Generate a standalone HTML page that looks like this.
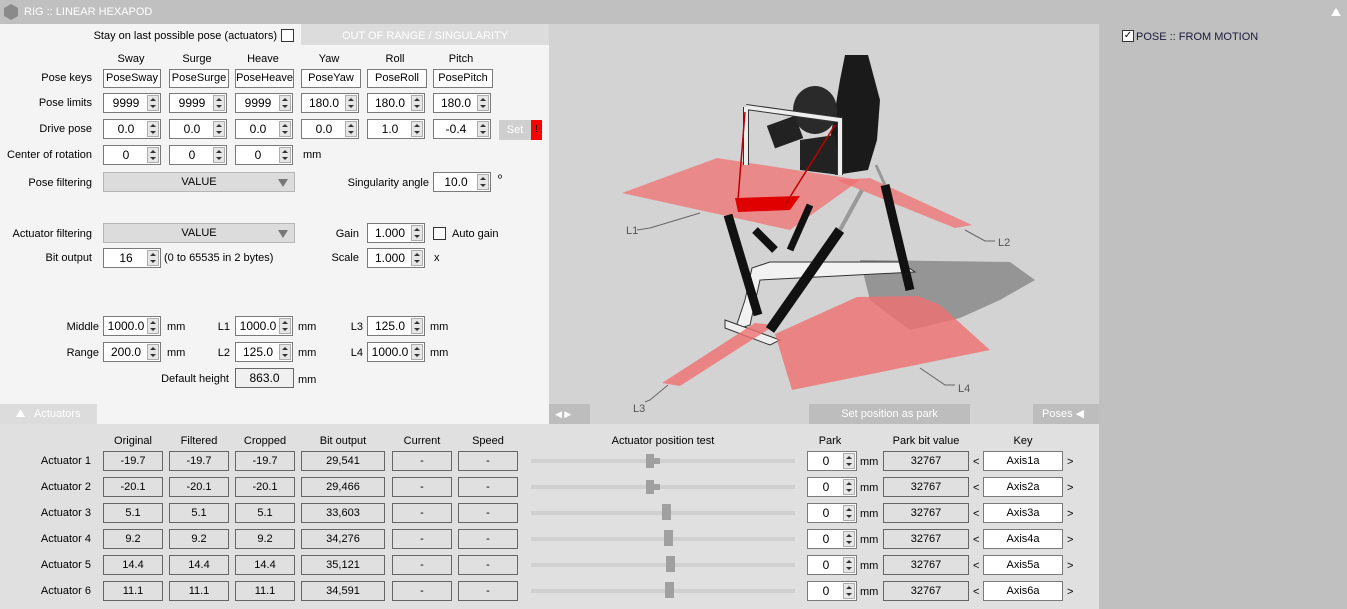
<!DOCTYPE html>
<html><head><meta charset="utf-8"><style>
*{box-sizing:border-box;margin:0;padding:0}
body{width:1347px;height:609px;overflow:hidden;background:#c0c0c0;font-family:"Liberation Sans",sans-serif;font-size:11px;color:#000;position:relative}
.a{position:absolute}
.t{position:absolute;white-space:nowrap;line-height:14px}
.r{text-align:right}
.c{text-align:center}
.box{position:absolute;background:#fff;border:1px solid #7a7a7a;height:20px;line-height:18px;text-align:center;white-space:nowrap}
.sp{position:absolute;background:#fff;border:1px solid #7a7a7a;height:20px;width:58px}
.sp span{position:absolute;left:0;width:44px;text-align:center;line-height:18px;font-size:12px}
.sp i{position:absolute;right:1px;top:1px;width:12px;height:16px;background:#e6e6e6;border:1px solid #adadad}
.sp i:before{content:"";position:absolute;left:2px;top:2px;border-left:3px solid transparent;border-right:3px solid transparent;border-bottom:3px solid #333}
.sp i:after{content:"";position:absolute;left:2px;top:9px;border-left:3px solid transparent;border-right:3px solid transparent;border-top:3px solid #333}
.ro{position:absolute;background:#e0e0e0;border:1px solid #666;height:20px;line-height:18px;text-align:center}
.dd{position:absolute;background:#dcdcdc;border:1px solid #b5b5b5;height:20px;line-height:18px;text-align:center}
.dd:after{content:"";position:absolute;right:6px;top:6px;border-left:5px solid transparent;border-right:5px solid transparent;border-top:8px solid #777}
.cb{position:absolute;width:13px;height:13px;border:1px solid #333;background:#fff}
.sl{position:absolute;height:4px;background:#d0d0d0;width:264px;left:531px}
.th{position:absolute;width:8px;height:14px;background:#a0a0a0}
.th:after{content:"";position:absolute;left:8px;top:4px;width:6px;height:6px;background:#a0a0a0}
</style></head><body>
<div class="a" style="left:0;top:0;width:1347px;height:24px;background:#c0c0c0"></div>
<svg class="a" style="left:3px;top:3px" width="16" height="18"><polygon points="8,1 15,5 15,13 8,17 1,13 1,5" fill="#8a8a8a"/></svg>
<div class="t" style="left:24px;top:5px;color:#fff">RIG :: LINEAR HEXAPOD</div>
<svg class="a" style="left:1331px;top:8px" width="10" height="8"><polygon points="5,0 10,8 0,8" fill="#fff"/></svg>

<div class="a" style="left:0;top:24px;width:549px;height:380px;background:#f4f4f4"></div>
<div class="a" style="left:301px;top:24px;width:248px;height:21px;background:#dcdcdc"></div>
<div class="t" style="left:301px;top:29px;width:248px;text-align:center;color:#fff">OUT OF RANGE / SINGULARITY</div>
<div class="t" style="left:60px;top:29px;width:217px;text-align:right">Stay on last possible pose (actuators)</div>
<div class="cb" style="left:281px;top:29px"></div>

<div class="t c" style="left:103px;top:52px;width:56px">Sway</div>
<div class="t c" style="left:169px;top:52px;width:56px">Surge</div>
<div class="t c" style="left:235px;top:52px;width:56px">Heave</div>
<div class="t c" style="left:301px;top:52px;width:56px">Yaw</div>
<div class="t c" style="left:367px;top:52px;width:56px">Roll</div>
<div class="t c" style="left:433px;top:52px;width:56px">Pitch</div>

<div class="t r" style="left:0;top:71px;width:92px">Pose keys</div>
<div class="box" style="left:103px;top:69px;width:58px;height:19px;line-height:17px">PoseSway</div>
<div class="box" style="left:169px;top:69px;width:60px;height:19px;line-height:17px;overflow:hidden">PoseSurge</div>
<div class="box" style="left:235px;top:69px;width:59px;height:19px;line-height:17px;overflow:hidden">PoseHeave</div>
<div class="box" style="left:301px;top:69px;width:60px;height:19px;line-height:17px">PoseYaw</div>
<div class="box" style="left:367px;top:69px;width:60px;height:19px;line-height:17px">PoseRoll</div>
<div class="box" style="left:433px;top:69px;width:60px;height:19px;line-height:17px">PosePitch</div>

<div class="t r" style="left:0;top:96px;width:92px">Pose limits</div>
<div class="sp" style="left:103px;top:93px"><span>9999</span><i></i></div>
<div class="sp" style="left:169px;top:93px"><span>9999</span><i></i></div>
<div class="sp" style="left:235px;top:93px"><span>9999</span><i></i></div>
<div class="sp" style="left:301px;top:93px"><span>180.0</span><i></i></div>
<div class="sp" style="left:367px;top:93px"><span>180.0</span><i></i></div>
<div class="sp" style="left:433px;top:93px"><span>180.0</span><i></i></div>

<div class="t r" style="left:0;top:122px;width:92px">Drive pose</div>
<div class="sp" style="left:103px;top:119px"><span>0.0</span><i></i></div>
<div class="sp" style="left:169px;top:119px"><span>0.0</span><i></i></div>
<div class="sp" style="left:235px;top:119px"><span>0.0</span><i></i></div>
<div class="sp" style="left:301px;top:119px"><span>0.0</span><i></i></div>
<div class="sp" style="left:367px;top:119px"><span>1.0</span><i></i></div>
<div class="sp" style="left:433px;top:119px"><span>-0.4</span><i></i></div>
<div class="a" style="left:499px;top:120px;width:32px;height:20px;background:#cfcfcf;color:#fff;text-align:center;line-height:20px">Set</div>
<div class="a" style="left:531px;top:120px;width:11px;height:20px;background:#f00;color:#000;text-align:center;line-height:20px;font-size:10px">!</div>

<div class="t r" style="left:0;top:148px;width:92px">Center of rotation</div>
<div class="sp" style="left:103px;top:145px"><span>0</span><i></i></div>
<div class="sp" style="left:169px;top:145px"><span>0</span><i></i></div>
<div class="sp" style="left:235px;top:145px"><span>0</span><i></i></div>
<div class="t" style="left:303px;top:148px">mm</div>

<div class="t r" style="left:0;top:176px;width:92px">Pose filtering</div>
<div class="dd" style="left:103px;top:172px;width:192px">VALUE</div>
<div class="t r" style="left:330px;top:176px;width:99px">Singularity angle</div>
<div class="sp" style="left:433px;top:172px"><span>10.0</span><i></i></div>
<div class="t" style="left:498px;top:172px">º</div>

<div class="t r" style="left:0;top:227px;width:92px">Actuator filtering</div>
<div class="dd" style="left:103px;top:223px;width:192px">VALUE</div>
<div class="t r" style="left:300px;top:227px;width:59px">Gain</div>
<div class="sp" style="left:367px;top:223px"><span>1.000</span><i></i></div>
<div class="cb" style="left:433px;top:227px"></div>
<div class="t" style="left:452px;top:227px">Auto gain</div>

<div class="t r" style="left:0;top:251px;width:92px">Bit output</div>
<div class="sp" style="left:103px;top:248px"><span>16</span><i></i></div>
<div class="t" style="left:164px;top:251px">(0 to 65535 in 2 bytes)</div>
<div class="t r" style="left:300px;top:251px;width:59px">Scale</div>
<div class="sp" style="left:367px;top:248px"><span>1.000</span><i></i></div>
<div class="t" style="left:434px;top:251px">x</div>

<div class="t r" style="left:0;top:320px;width:99px">Middle</div>
<div class="sp" style="left:103px;top:316px"><span>1000.0</span><i></i></div>
<div class="t" style="left:167px;top:320px">mm</div>
<div class="t r" style="left:200px;top:320px;width:30px">L1</div>
<div class="sp" style="left:235px;top:316px"><span>1000.0</span><i></i></div>
<div class="t" style="left:298px;top:320px">mm</div>
<div class="t r" style="left:330px;top:320px;width:33px">L3</div>
<div class="sp" style="left:367px;top:316px"><span>125.0</span><i></i></div>
<div class="t" style="left:430px;top:320px">mm</div>

<div class="t r" style="left:0;top:346px;width:99px">Range</div>
<div class="sp" style="left:103px;top:342px"><span>200.0</span><i></i></div>
<div class="t" style="left:167px;top:346px">mm</div>
<div class="t r" style="left:200px;top:346px;width:30px">L2</div>
<div class="sp" style="left:235px;top:342px"><span>125.0</span><i></i></div>
<div class="t" style="left:298px;top:346px">mm</div>
<div class="t r" style="left:330px;top:346px;width:33px">L4</div>
<div class="sp" style="left:367px;top:342px"><span>1000.0</span><i></i></div>
<div class="t" style="left:430px;top:346px">mm</div>

<div class="t r" style="left:100px;top:372px;width:129px">Default height</div>
<div class="ro" style="left:235px;top:368px;width:59px;background:#f0f0f0;font-size:12px">863.0</div>
<div class="t" style="left:298px;top:373px">mm</div>

<div class="a" style="left:0;top:404px;width:549px;height:20px;background:#f4f4f4"></div>
<div class="a" style="left:0;top:404px;width:97px;height:20px;background:#dcdcdc"></div>
<svg class="a" style="left:16px;top:409px" width="9" height="8"><polygon points="4.5,0 9,8 0,8" fill="#fff"/></svg>
<div class="t" style="left:34px;top:407px;color:#fff">Actuators</div>

<div class="a" style="left:549px;top:24px;width:550px;height:400px;background:#d3d3d3;overflow:hidden">
<svg width="550" height="400" viewBox="549 24 550 400">
 <polygon points="860,260 1010,262 1035,280 1000,300 960,318 910,330 870,300" fill="#7a7a7a" opacity="0.7"/>
 <polygon points="735,330 745,300 752,268 770,262 900,262 915,272 760,280 750,325" fill="#f2f2f2" stroke="#333" stroke-width="1"/>
 <polygon points="725,320 780,340 770,345 725,328" fill="#eee" stroke="#333"/>
 <polygon points="622,193 717,158 860,180 790,230" fill="#f07070" opacity="0.75"/>
 <polygon points="836,180 870,178 972,225 955,228" fill="#f07070" opacity="0.75"/>
 <polygon points="775,334 857,297 918,296 940,305 990,350 792,390" fill="#f07070" opacity="0.8"/>
 <polygon points="662,383 755,323 775,325 680,386" fill="#f07070" opacity="0.8"/>
 <polygon points="735,198 800,196 790,210 738,212" fill="#e00000"/>
 <path d="M845,55 L868,55 L880,100 L877,140 L868,170 L835,175 L830,140 L840,80 Z" fill="#1a1a1a"/>
 <ellipse cx="815" cy="110" rx="22" ry="24" fill="#2a2a2a"/>
 <path d="M800,140 L835,135 L840,175 L800,170 Z" fill="#222"/>
 <rect x="770" y="120" width="30" height="24" fill="#222" transform="rotate(-20 785 132)"/>
 <polyline points="746,107 746,165" stroke="#333" stroke-width="6" fill="none"/>
 <polyline points="746,107 840,120 840,175" stroke="#333" stroke-width="6" fill="none"/>
 <polyline points="746,107 746,165" stroke="#eee" stroke-width="4" fill="none"/>
 <polyline points="746,107 840,120 840,175" stroke="#eee" stroke-width="4" fill="none"/>
 <line x1="745" y1="112" x2="738" y2="200" stroke="#b00" stroke-width="1.5"/>
 <line x1="835" y1="125" x2="785" y2="205" stroke="#b00" stroke-width="1.5"/>
 <line x1="728" y1="215" x2="758" y2="315" stroke="#111" stroke-width="9"/>
 <line x1="770" y1="330" x2="840" y2="230" stroke="#111" stroke-width="10"/>
 <line x1="840" y1="230" x2="862" y2="190" stroke="#999" stroke-width="4"/>
 <line x1="885" y1="185" x2="910" y2="290" stroke="#111" stroke-width="9"/>
 <line x1="755" y1="230" x2="775" y2="250" stroke="#111" stroke-width="8"/>
 <line x1="790" y1="250" x2="810" y2="205" stroke="#111" stroke-width="7"/>
 <line x1="876" y1="165" x2="885" y2="185" stroke="#999" stroke-width="3"/>
 <polyline points="637,230 650,228 700,213" stroke="#666" fill="none"/>
 <text x="626" y="234" font-size="11" fill="#555" font-family="Liberation Sans">L1</text>
 <polyline points="965,230 985,241 995,241" stroke="#666" fill="none"/>
 <text x="998" y="246" font-size="11" fill="#555" font-family="Liberation Sans">L2</text>
 <polyline points="668,385 650,400 645,402" stroke="#666" fill="none"/>
 <text x="633" y="412" font-size="11" fill="#555" font-family="Liberation Sans">L3</text>
 <polyline points="920,368 945,385 955,385" stroke="#666" fill="none"/>
 <text x="958" y="392" font-size="11" fill="#555" font-family="Liberation Sans">L4</text>
</svg>
</div>
<div class="a" style="left:549px;top:404px;width:41px;height:20px;background:#bdbdbd"></div>
<div class="t" style="left:555px;top:407px;color:#fff;font-size:9px">◀ ▶</div>
<div class="a" style="left:809px;top:404px;width:161px;height:20px;background:#bdbdbd;color:#fff;text-align:center;line-height:20px">Set position as park</div>
<div class="a" style="left:1033px;top:404px;width:66px;height:20px;background:#bdbdbd;color:#fff;line-height:20px;padding-left:9px">Poses ◀</div>

<div class="a" style="left:1122px;top:30px;width:12px;height:12px;border:1px solid #333;background:#fff;font-size:10px;line-height:10px;text-align:center">✓</div>
<div class="t" style="left:1136px;top:30px;color:#1a1a3a">POSE :: FROM MOTION</div>

<div class="a" style="left:0;top:424px;width:1099px;height:185px;background:#e0e0e0"></div>
<div class="t c" style="left:103px;top:434px;width:60px">Original</div>
<div class="t c" style="left:169px;top:434px;width:60px">Filtered</div>
<div class="t c" style="left:235px;top:434px;width:60px">Cropped</div>
<div class="t c" style="left:301px;top:434px;width:84px">Bit output</div>
<div class="t c" style="left:392px;top:434px;width:60px">Current</div>
<div class="t c" style="left:458px;top:434px;width:60px">Speed</div>
<div class="t c" style="left:531px;top:434px;width:264px">Actuator position test</div>
<div class="t c" style="left:807px;top:434px;width:46px">Park</div>
<div class="t c" style="left:883px;top:434px;width:86px">Park bit value</div>
<div class="t c" style="left:983px;top:434px;width:80px">Key</div>

<div class="t r" style="left:0;top:454px;width:91px">Actuator 1</div>
<div class="ro" style="left:103px;top:451px;width:60px">-19.7</div><div class="ro" style="left:169px;top:451px;width:60px">-19.7</div><div class="ro" style="left:235px;top:451px;width:60px">-19.7</div><div class="ro" style="left:301px;top:451px;width:84px">29,541</div><div class="ro" style="left:392px;top:451px;width:60px">-</div><div class="ro" style="left:458px;top:451px;width:60px">-</div>
<div class="sl" style="top:459px"></div><div class="th" style="left:646px;top:454px"></div>
<div class="sp" style="left:807px;top:451px;width:50px"><span style="width:36px">0</span><i></i></div><div class="t" style="left:860px;top:455px">mm</div>
<div class="ro" style="left:883px;top:451px;width:86px">32767</div><div class="t" style="left:973px;top:455px">&lt;</div>
<div class="box" style="left:983px;top:451px;width:80px">Axis1a</div><div class="t" style="left:1067px;top:455px">&gt;</div>

<div class="t r" style="left:0;top:480px;width:91px">Actuator 2</div>
<div class="ro" style="left:103px;top:477px;width:60px">-20.1</div><div class="ro" style="left:169px;top:477px;width:60px">-20.1</div><div class="ro" style="left:235px;top:477px;width:60px">-20.1</div><div class="ro" style="left:301px;top:477px;width:84px">29,466</div><div class="ro" style="left:392px;top:477px;width:60px">-</div><div class="ro" style="left:458px;top:477px;width:60px">-</div>
<div class="sl" style="top:485px"></div><div class="th" style="left:646px;top:480px"></div>
<div class="sp" style="left:807px;top:477px;width:50px"><span style="width:36px">0</span><i></i></div><div class="t" style="left:860px;top:481px">mm</div>
<div class="ro" style="left:883px;top:477px;width:86px">32767</div><div class="t" style="left:973px;top:481px">&lt;</div>
<div class="box" style="left:983px;top:477px;width:80px">Axis2a</div><div class="t" style="left:1067px;top:481px">&gt;</div>

<div class="t r" style="left:0;top:506px;width:91px">Actuator 3</div>
<div class="ro" style="left:103px;top:503px;width:60px">5.1</div><div class="ro" style="left:169px;top:503px;width:60px">5.1</div><div class="ro" style="left:235px;top:503px;width:60px">5.1</div><div class="ro" style="left:301px;top:503px;width:84px">33,603</div><div class="ro" style="left:392px;top:503px;width:60px">-</div><div class="ro" style="left:458px;top:503px;width:60px">-</div>
<div class="sl" style="top:511px"></div><div class="a" style="left:662px;top:504px;width:9px;height:16px;background:#a0a0a0"></div>
<div class="sp" style="left:807px;top:503px;width:50px"><span style="width:36px">0</span><i></i></div><div class="t" style="left:860px;top:507px">mm</div>
<div class="ro" style="left:883px;top:503px;width:86px">32767</div><div class="t" style="left:973px;top:507px">&lt;</div>
<div class="box" style="left:983px;top:503px;width:80px">Axis3a</div><div class="t" style="left:1067px;top:507px">&gt;</div>

<div class="t r" style="left:0;top:532px;width:91px">Actuator 4</div>
<div class="ro" style="left:103px;top:529px;width:60px">9.2</div><div class="ro" style="left:169px;top:529px;width:60px">9.2</div><div class="ro" style="left:235px;top:529px;width:60px">9.2</div><div class="ro" style="left:301px;top:529px;width:84px">34,276</div><div class="ro" style="left:392px;top:529px;width:60px">-</div><div class="ro" style="left:458px;top:529px;width:60px">-</div>
<div class="sl" style="top:537px"></div><div class="a" style="left:664px;top:530px;width:9px;height:16px;background:#a0a0a0"></div>
<div class="sp" style="left:807px;top:529px;width:50px"><span style="width:36px">0</span><i></i></div><div class="t" style="left:860px;top:533px">mm</div>
<div class="ro" style="left:883px;top:529px;width:86px">32767</div><div class="t" style="left:973px;top:533px">&lt;</div>
<div class="box" style="left:983px;top:529px;width:80px">Axis4a</div><div class="t" style="left:1067px;top:533px">&gt;</div>

<div class="t r" style="left:0;top:558px;width:91px">Actuator 5</div>
<div class="ro" style="left:103px;top:555px;width:60px">14.4</div><div class="ro" style="left:169px;top:555px;width:60px">14.4</div><div class="ro" style="left:235px;top:555px;width:60px">14.4</div><div class="ro" style="left:301px;top:555px;width:84px">35,121</div><div class="ro" style="left:392px;top:555px;width:60px">-</div><div class="ro" style="left:458px;top:555px;width:60px">-</div>
<div class="sl" style="top:563px"></div><div class="a" style="left:666px;top:556px;width:9px;height:16px;background:#a0a0a0"></div>
<div class="sp" style="left:807px;top:555px;width:50px"><span style="width:36px">0</span><i></i></div><div class="t" style="left:860px;top:559px">mm</div>
<div class="ro" style="left:883px;top:555px;width:86px">32767</div><div class="t" style="left:973px;top:559px">&lt;</div>
<div class="box" style="left:983px;top:555px;width:80px">Axis5a</div><div class="t" style="left:1067px;top:559px">&gt;</div>

<div class="t r" style="left:0;top:584px;width:91px">Actuator 6</div>
<div class="ro" style="left:103px;top:581px;width:60px">11.1</div><div class="ro" style="left:169px;top:581px;width:60px">11.1</div><div class="ro" style="left:235px;top:581px;width:60px">11.1</div><div class="ro" style="left:301px;top:581px;width:84px">34,591</div><div class="ro" style="left:392px;top:581px;width:60px">-</div><div class="ro" style="left:458px;top:581px;width:60px">-</div>
<div class="sl" style="top:589px"></div><div class="a" style="left:665px;top:582px;width:9px;height:16px;background:#a0a0a0"></div>
<div class="sp" style="left:807px;top:581px;width:50px"><span style="width:36px">0</span><i></i></div><div class="t" style="left:860px;top:585px">mm</div>
<div class="ro" style="left:883px;top:581px;width:86px">32767</div><div class="t" style="left:973px;top:585px">&lt;</div>
<div class="box" style="left:983px;top:581px;width:80px">Axis6a</div><div class="t" style="left:1067px;top:585px">&gt;</div>
</body></html>
